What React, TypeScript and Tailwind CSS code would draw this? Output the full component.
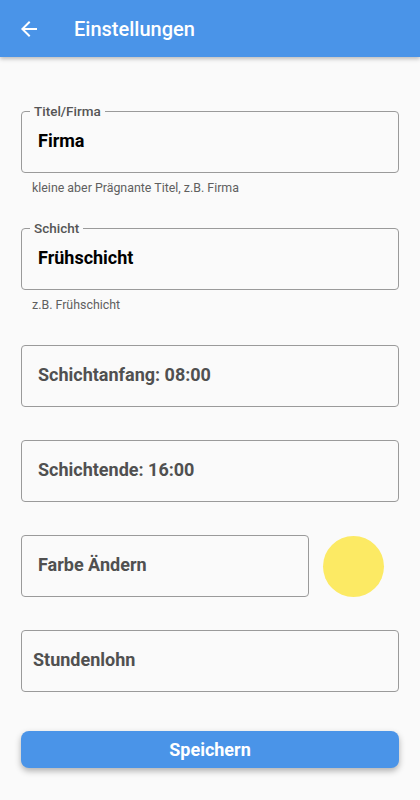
import React from 'react';

type FieldProps = {
  label?: string;
  value: string;
  helper?: string;
  muted?: boolean;
  inset?: boolean;
};

function OutlinedField({ label, value, helper, muted, inset = true }: FieldProps) {
  return (
    <div className="flex flex-col">
      <div className="relative h-[62px] rounded-[4px] border border-[#9a9a9a] flex items-center">
        {label && (
          <span className="absolute -top-[9px] left-[8px] px-[4px] bg-[#fafafa] text-[13.5px] leading-[16px] font-medium text-[#555]">
            {label}
          </span>
        )}
        <span
          className={`${inset ? 'pl-[16px]' : 'pl-[11px]'} pb-[3px] text-[18px] font-bold ${
            muted ? 'text-[#505050]' : 'text-black'
          }`}
        >
          {value}
        </span>
      </div>
      {helper && (
        <div className="mt-2 pl-[11px] text-[12.4px] leading-[14px] text-[#5f5f5f]">{helper}</div>
      )}
    </div>
  );
}

export default function App() {
  return (
    <div className="min-h-[800px] w-[420px] bg-[#fafafa] font-['Roboto',sans-serif]">
      {/* App bar */}
      <div className="h-[57px] bg-[#4a94e8] flex items-center shadow-[0_2px_4px_rgba(0,0,0,0.25)]">
        <div className="w-[57px] flex justify-center">
          <svg width="24" height="24" viewBox="0 0 24 24" fill="white">
            <path d="M20 11H7.83l5.59-5.59L12 4l-8 8 8 8 1.41-1.41L7.83 13H20v-2z" />
          </svg>
        </div>
        <h1 className="ml-[17px] text-[20px] font-medium text-white">Einstellungen</h1>
      </div>

      {/* Form */}
      <div className="px-[21px] pt-[54px] flex flex-col gap-[33px]">
        <OutlinedField label="Titel/Firma" value="Firma" helper="kleine aber Prägnante Titel, z.B. Firma" />
        <OutlinedField label="Schicht" value="Frühschicht" helper="z.B. Frühschicht" />
        <OutlinedField value="Schichtanfang: 08:00" muted />
        <OutlinedField value="Schichtende: 16:00" muted />
        <div className="flex items-center gap-[14px]">
          <div className="flex-1">
            <OutlinedField value="Farbe Ändern" muted />
          </div>
          <div className="w-[61px] h-[61px] rounded-full bg-[#fcea64] mr-[15px]" />
        </div>
        <OutlinedField value="Stundenlohn" muted inset={false} />
        <button className="mt-[6px] h-[37px] rounded-[8px] bg-[#4a94e8] text-white text-[18px] font-bold shadow-[0_3px_6px_rgba(0,0,0,0.3)]">
          Speichern
        </button>
      </div>
    </div>
  );
}
